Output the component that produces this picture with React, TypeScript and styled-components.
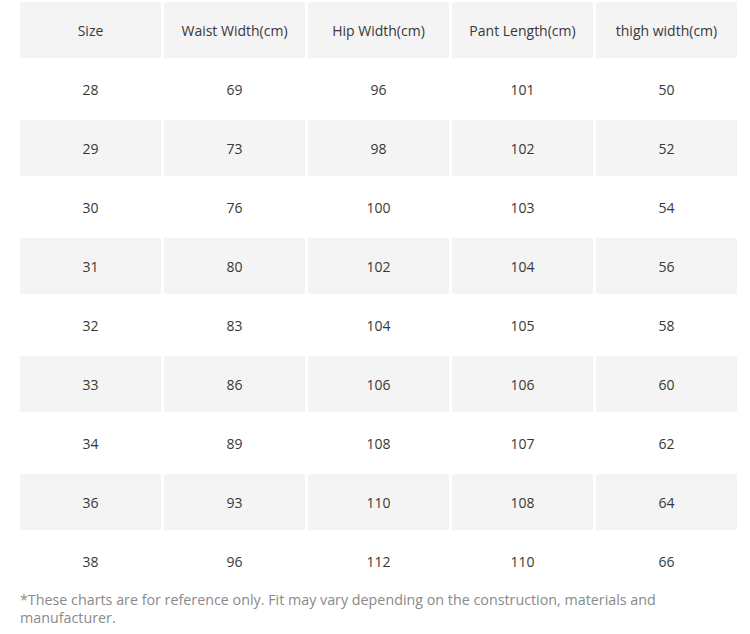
import React from "react";
import styled, { createGlobalStyle } from "styled-components";

const Global = createGlobalStyle`
  html, body { margin: 0; padding: 0; background: #fff; }
  body { font-family: "Open Sans", "Liberation Sans", sans-serif; }
`;

const Page = styled.div`
  padding: 2px 13px 0 20px;
  width: 750px;
  box-sizing: border-box;
`;

const Table = styled.div`
  display: flex;
  flex-direction: column;
  gap: 3px;
  width: 717px;
`;

const Row = styled.div`
  display: grid;
  grid-template-columns: repeat(5, 141px);
  column-gap: 3px;
  height: 56px;
`;

const Cell = styled.div<{ $shaded: boolean }>`
  display: flex;
  align-items: center;
  justify-content: center;
  background: ${(p) => (p.$shaded ? "#f4f4f4" : "#ffffff")};
  color: #383838;
  font-size: 14px;
`;

const Note = styled.p`
  margin: 2px 0 0;
  width: 690px;
  color: #8a8a8a;
  font-size: 14.3px;
  line-height: 18px;
`;

const headers = ["Size", "Waist Width(cm)", "Hip Width(cm)", "Pant Length(cm)", "thigh width(cm)"];
const rows = [
  ["28", "69", "96", "101", "50"],
  ["29", "73", "98", "102", "52"],
  ["30", "76", "100", "103", "54"],
  ["31", "80", "102", "104", "56"],
  ["32", "83", "104", "105", "58"],
  ["33", "86", "106", "106", "60"],
  ["34", "89", "108", "107", "62"],
  ["36", "93", "110", "108", "64"],
  ["38", "96", "112", "110", "66"],
];

export default function App() {
  const all = [headers, ...rows];
  return (
    <Page>
      <Global />
      <Table>
        {all.map((r, i) => (
          <Row key={i}>
            {r.map((c, j) => (
              <Cell key={j} $shaded={i % 2 === 0}>
                {c}
              </Cell>
            ))}
          </Row>
        ))}
      </Table>
      <Note>
        *These charts are for reference only. Fit may vary depending on the construction, materials and manufacturer.
      </Note>
    </Page>
  );
}
